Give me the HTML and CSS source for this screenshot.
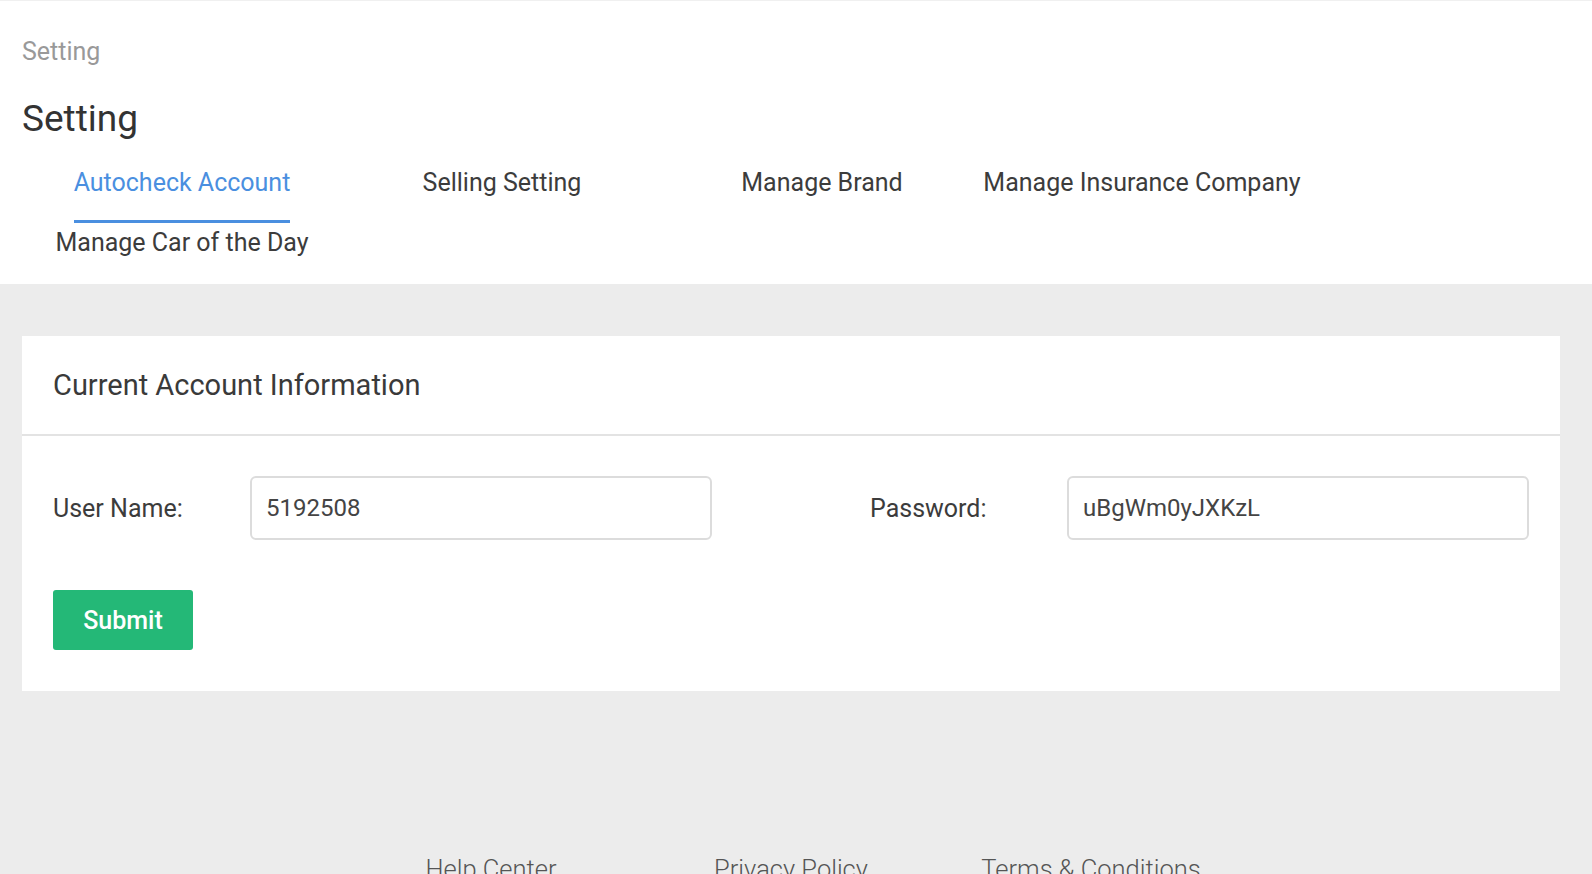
FILE: index.html
```html
<!DOCTYPE html>
<html lang="en">
<head>
<meta charset="utf-8">
<title>Setting</title>
<link rel="stylesheet" href="styles.css">
</head>
<body>
<header class="top">
  <div class="breadcrumb">Setting</div>
  <h1 class="title">Setting</h1>
  <nav class="tabs">
    <a class="tab active"><span class="tab-label">Autocheck Account</span></a>
    <a class="tab"><span class="tab-label">Selling Setting</span></a>
    <a class="tab"><span class="tab-label">Manage Brand</span></a>
    <a class="tab"><span class="tab-label">Manage Insurance Company</span></a>
    <a class="tab"><span class="tab-label">Manage Car of the Day</span></a>
  </nav>
</header>
<main class="main">
  <section class="card">
    <div class="card-head">Current Account Information</div>
    <div class="card-body">
      <div class="form-grid">
        <div class="field">
          <label class="field-label">User Name:</label>
          <input class="field-input" type="text" value="5192508">
        </div>
        <div class="field">
          <label class="field-label">Password:</label>
          <input class="field-input" type="text" value="uBgWm0yJXKzL">
        </div>
      </div>
      <button class="btn-submit" type="button">Submit</button>
    </div>
  </section>
  <footer class="footer">
    <a class="footer-link">Help Center</a>
    <a class="footer-link">Privacy Policy</a>
    <a class="footer-link">Terms &amp; Conditions</a>
  </footer>
</main>
</body>
</html>
```
FILE: styles.css
```css
* { box-sizing: border-box; }
html, body { margin: 0; padding: 0; }
body {
  background: #ececec;
  font-family: Roboto, "Noto Sans", sans-serif;
  color: #333;
  overflow: hidden;
  height: 874px;
}
.top {
  background: #fff;
  border-top: 1px solid #f0f0f0;
  padding: 36px 22px 1px 22px;
}
.breadcrumb {
  font-size: 25px;
  line-height: 30px;
  color: #999;
}
.title {
  margin: 30px 0 0 0;
  font-size: 37px;
  line-height: 44px;
  font-weight: 400;
  color: #333;
}
.tabs {
  margin-top: 22px;
  display: flex;
  flex-wrap: wrap;
}
.tab {
  width: 320px;
  height: 60px;
  display: flex;
  justify-content: center;
  align-items: flex-start;
  font-size: 25px;
  color: #3c3c3c;
}
.tab-label {
  display: block;
  line-height: 40px;
  height: 60px;
  border-bottom: 3px solid transparent;
}
.tab.active .tab-label {
  color: #4a8fe0;
  border-bottom-color: #4a8fe0;
}
.main {
  padding: 52px 32px 0 22px;
}
.card {
  background: #fff;
}
.card-head {
  height: 100px;
  padding: 0 31px;
  display: flex;
  align-items: center;
  font-size: 29px;
  color: #3a3a3a;
  border-bottom: 2px solid #e3e3e3;
}
.card-body {
  padding: 40px 31px 41px 31px;
}
.form-grid {
  display: grid;
  grid-template-columns: 1fr 1fr;
  column-gap: 158px;
}
.field {
  display: flex;
  align-items: center;
}
.field-label {
  width: 197px;
  flex: none;
  font-size: 25px;
  color: #3c3c3c;
}
.field-input {
  flex: 1;
  min-width: 0;
  height: 64px;
  border: 2px solid #dcdcdc;
  border-radius: 6px;
  padding: 0 14px;
  font-family: inherit;
  font-size: 24px;
  color: #444;
  background: #fff;
  outline: none;
}
.btn-submit {
  margin-top: 50px;
  width: 140px;
  height: 60px;
  border: none;
  border-radius: 3px;
  background: #24b877;
  color: #fff;
  font-family: inherit;
  font-size: 25px;
  font-weight: 500;
  display: block;
}
.footer {
  display: flex;
  justify-content: center;
  padding-top: 163px;
}
.footer-link {
  width: 300px;
  text-align: center;
  font-size: 25.5px;
  line-height: 30px;
  font-weight: 300;
  color: #555;
}
```
